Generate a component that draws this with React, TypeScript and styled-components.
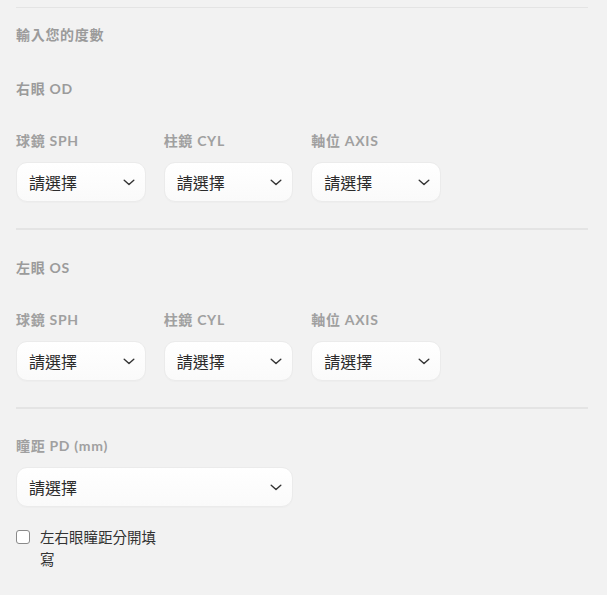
import React, { useState } from "react";
import styled, { createGlobalStyle } from "styled-components";

const Global = createGlobalStyle`
  html, body { margin: 0; padding: 0; background: #f2f2f2; }
  body { font-family: Lato, "Noto Sans CJK TC", sans-serif; }
  * { box-sizing: border-box; }
`;

const Page = styled.div`
  padding: 7px 19px 0 16px;
  min-height: 595px;
  background: #f2f2f2;
`;

const Section = styled.section<{ $first?: boolean; $top?: number }>`
  border-top: ${(p) => (p.$first ? "1px" : "2px")} solid #e4e4e4;
  padding-top: ${(p) => p.$top ?? 26}px;
  padding-bottom: 26px;
`;

const Title = styled.div<{ $gap?: number }>`
  font-size: 14px;
  line-height: 20px;
  font-weight: 700;
  letter-spacing: 0.7px;
  color: #9b9b9b;
  margin-bottom: ${(p) => p.$gap ?? 0}px;
`;

const Grid = styled.div`
  width: 425px;
  display: grid;
  grid-template-columns: repeat(3, 1fr);
  column-gap: 18px;
`;

const Field = styled.div<{ $span?: number }>`
  grid-column: span ${(p) => p.$span ?? 1};
  display: flex;
  flex-direction: column;
  gap: 11px;
`;

const Label = styled.label`
  font-size: 14px;
  line-height: 20px;
  font-weight: 700;
  letter-spacing: 0.7px;
  color: #a0a0a0;
`;

const SelectBox = styled.div`
  height: 40px;
  border: 1px solid #ebebeb;
  border-radius: 11px;
  background: linear-gradient(#ffffff, #fafafa);
  box-shadow: 0 1px 1px rgba(0, 0, 0, 0.02);
  display: flex;
  align-items: center;
  justify-content: space-between;
  padding: 0 10px 0 12px;
  font-size: 16px;
  color: #2b2b2b;
  font-family: "Noto Sans CJK TC", sans-serif;
`;

const Chevron = () => (
  <svg width="12" height="7" viewBox="0 0 12 7" fill="none">
    <path d="M1.2 1.2l4.8 4.3 4.8-4.3" stroke="#333" strokeWidth="1.4" strokeLinecap="round" strokeLinejoin="round" />
  </svg>
);

const Select = () => (
  <SelectBox>
    <span>請選擇</span>
    <Chevron />
  </SelectBox>
);

const CheckRow = styled.label`
  display: flex;
  align-items: flex-start;
  gap: 10px;
  margin-top: 19px;
  cursor: pointer;
`;

const Box = styled.span<{ $on: boolean }>`
  flex: none;
  width: 14px;
  height: 14px;
  margin-top: 4px;
  border: 1px solid #8a8a8a;
  border-radius: 3px;
  background: ${(p) => (p.$on ? "#333" : "#fff")};
`;

const CheckText = styled.span`
  max-width: 120px;
  font-family: "Noto Sans CJK TC", sans-serif;
  font-size: 14.5px;
  line-height: 22px;
  color: #333;
`;

const Eye = ({ title }: { title: string }) => (
  <>
    <Title $gap={32}>{title}</Title>
    <Grid>
      <Field>
        <Label>球鏡 SPH</Label>
        <Select />
      </Field>
      <Field>
        <Label>柱鏡 CYL</Label>
        <Select />
      </Field>
      <Field>
        <Label>軸位 AXIS</Label>
        <Select />
      </Field>
    </Grid>
  </>
);

export default function App() {
  const [on, setOn] = useState(false);
  return (
    <Page>
      <Global />
      <Section $first $top={17}>
        <Title $gap={34}>輸入您的度數</Title>
        <Eye title="右眼 OD" />
      </Section>
      <Section $top={28}>
        <Eye title="左眼 OS" />
      </Section>
      <Section $top={27}>
        <Grid>
          <Field $span={2}>
            <Label>瞳距 PD (mm)</Label>
            <Select />
          </Field>
        </Grid>
        <CheckRow onClick={() => setOn(!on)}>
          <Box $on={on} />
          <CheckText>左右眼瞳距分開填寫</CheckText>
        </CheckRow>
      </Section>
    </Page>
  );
}
